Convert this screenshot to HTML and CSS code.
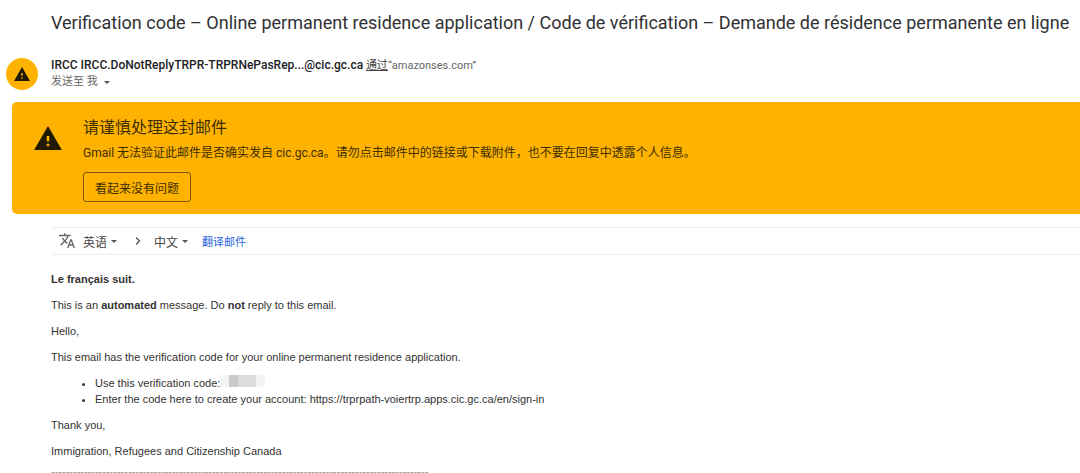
FILE: index.html
```
<!DOCTYPE html>
<html lang="zh-CN">
<head>
    <meta charset="UTF-8">
    <meta name="viewport" content="width=device-width, initial-scale=1.0">
    <title>Verification code</title>
    <link rel="stylesheet" href="styles.css">
</head>
<body>
    <main class="mail">
        <h1 class="subject">Verification code – Online permanent residence application / Code de vérification – Demande de résidence permanente en ligne</h1>

        <header class="sender">
            <div class="avatar">
                <svg width="16" height="14" viewBox="0 0 22 19" aria-hidden="true">
                    <path fill="#211a00" fill-rule="evenodd" d="M0 19h22L11 0zM12 16h-2v-2h2zM12 12h-2V8h2z"/>
                </svg>
            </div>
            <div class="sender-info">
                <div class="from"><b>IRCC IRCC.DoNotReplyTRPR-TRPRNePasRep...@cic.gc.ca</b> <a class="via" href="#">通过</a>“amazonses.com”</div>
                <button type="button" class="recipient">发送至 我 <span class="caret"></span></button>
            </div>
        </header>

        <section class="warning">
            <svg class="warning-icon" width="28" height="24" viewBox="0 0 22 19" aria-hidden="true">
                <path fill="#211a00" fill-rule="evenodd" d="M0 19h22L11 0zM12 16h-2v-2h2zM12 12h-2V8h2z"/>
            </svg>
            <div class="warning-text">
                <h2>请谨慎处理这封邮件</h2>
                <p>Gmail 无法验证此邮件是否确实发自 cic.gc.ca。请勿点击邮件中的链接或下载附件，也不要在回复中透露个人信息。</p>
                <button type="button" class="safe">看起来没有问题</button>
            </div>
        </section>

        <div class="translate">
            <svg class="translate-icon" width="16" height="16" viewBox="1 2 22 21" aria-hidden="true">
                <path fill="#666" d="M12.87 15.07l-2.54-2.51.03-.03A17.52 17.52 0 0 0 14.07 6H17V4h-7V2H8v2H1v2h11.17C11.5 7.92 10.44 9.75 9 11.35 8.07 10.32 7.3 9.19 6.69 8h-2c.73 1.63 1.73 3.17 2.98 4.56l-5.09 5.02L4 19l5-5 3.11 3.11.76-2.04zM18.5 10h-2L12 22h2l1.12-3h4.75L21 22h2l-4.5-12zm-2.62 7l1.62-4.33L19.12 17h-3.24z"/>
            </svg>
            <button type="button" class="language">英语 <span class="caret"></span></button>
            <svg class="chevron" width="6" height="8" viewBox="0 0 6 8" aria-hidden="true">
                <path d="M1 0.500L4.500 4L1 7.500" fill="none" stroke="#555" stroke-width="1.300"/>
            </svg>
            <button type="button" class="language">中文 <span class="caret"></span></button>
            <a class="translate-link" href="#">翻译邮件</a>
        </div>

        <article class="message" lang="en">
            <p><b>Le français suit.</b></p>
            <p>This is an <b>automated</b> message. Do <b>not</b> reply to this email.</p>
            <p>Hello,</p>
            <p>This email has the verification code for your online permanent residence application.</p>
            <ul>
                <li>Use this verification code:<span class="redacted"><i></i><i></i><i></i><i></i><i></i></span></li>
                <li>Enter the code here to create your account: https://trprpath-voiertrp.apps.cic.gc.ca/en/sign-in</li>
            </ul>
            <p>Thank you,</p>
            <p>Immigration, Refugees and Citizenship Canada</p>
            <p class="divider">-------------------------------------------------------------------------------------------------------</p>
        </article>
    </main>
</body>
</html>
```
FILE: styles.css
```
* {
    box-sizing: border-box;
}

body {
    margin: 0;
    background-color: #fff;
    color: #333;
    font-family: Roboto, "Noto Sans CJK SC", sans-serif;
    font-size: 11px;
}

h1, h2, p, ul {
    margin: 0;
    font-weight: 400;
}

button {
    font-family: inherit;
    font-size: 12px;
    background: none;
    border: none;
    padding: 0;
    cursor: pointer;
}

.subject {
    padding: 11px 0 0 51px;
    font-size: 18px;
    line-height: 24px;
    white-space: nowrap;
    color: #303134;
}

.sender {
    display: flex;
    align-items: center;
    gap: 13px;
    padding: 22px 0 0 6px;
}

.avatar {
    display: flex;
    align-items: center;
    justify-content: center;
    width: 32px;
    height: 32px;
    border-radius: 50%;
    background-color: #ffb300;
}

.from {
    line-height: 16px;
    color: #666;
}

.from b {
    font-size: 12px;
    font-weight: 500;
    color: #202124;
}

.via {
    color: #444;
}

.recipient {
    display: flex;
    align-items: center;
    gap: 6px;
    font-size: 11px;
    line-height: 16px;
    color: #666;
}

.caret {
    border: 3px solid transparent;
    border-top-color: #555;
    border-bottom: none;
}

.warning {
    display: flex;
    gap: 21px;
    margin: 12px 0 0 12px;
    padding: 12px 22px;
    border-radius: 5px 0 0 5px;
    background-color: #ffb300;
    color: #3c2e00;
}

.warning-icon {
    margin-top: 12px;
}

.warning h2 {
    font-size: 16px;
    line-height: 28px;
}

.warning p {
    font-size: 12px;
    line-height: 22px;
}

.safe {
    display: block;
    margin-top: 8px;
    padding: 0 11px;
    height: 30px;
    border: 1px solid #7a5803;
    border-radius: 3px;
    color: #3c2e00;
}

.translate {
    display: flex;
    align-items: center;
    height: 28px;
    margin: 13px 0 0 51px;
    padding-left: 8px;
    border-top: 1px solid #eee;
    border-bottom: 1px solid #eee;
}

.language {
    display: flex;
    align-items: center;
    gap: 4px;
    color: #444;
}

.translate-icon {
    margin-right: 8px;
}

.chevron {
    margin: 0 13px 0 18px;
}

.translate-link {
    margin-left: 14px;
    color: #2a66dd;
    text-decoration: none;
}

.message {
    padding: 16px 0 0 51px;
    font-family: "Liberation Sans", Arial, sans-serif;
    line-height: 16px;
}

.message p {
    margin-bottom: 10px;
}

.message ul {
    margin-bottom: 10px;
    padding-left: 44px;
}

.message .divider {
    margin: 0;
    line-height: 4px;
    color: #999;
}

.redacted {
    display: inline-flex;
    height: 12px;
    vertical-align: top;
}

.redacted i {
    width: 9px;
    background-color: #dcdcdc;
}

.redacted i:first-child,
.redacted i:last-child {
    background-color: #f4f4f4;
}

.redacted i:nth-child(2) {
    background-color: #cacaca;
}
```
